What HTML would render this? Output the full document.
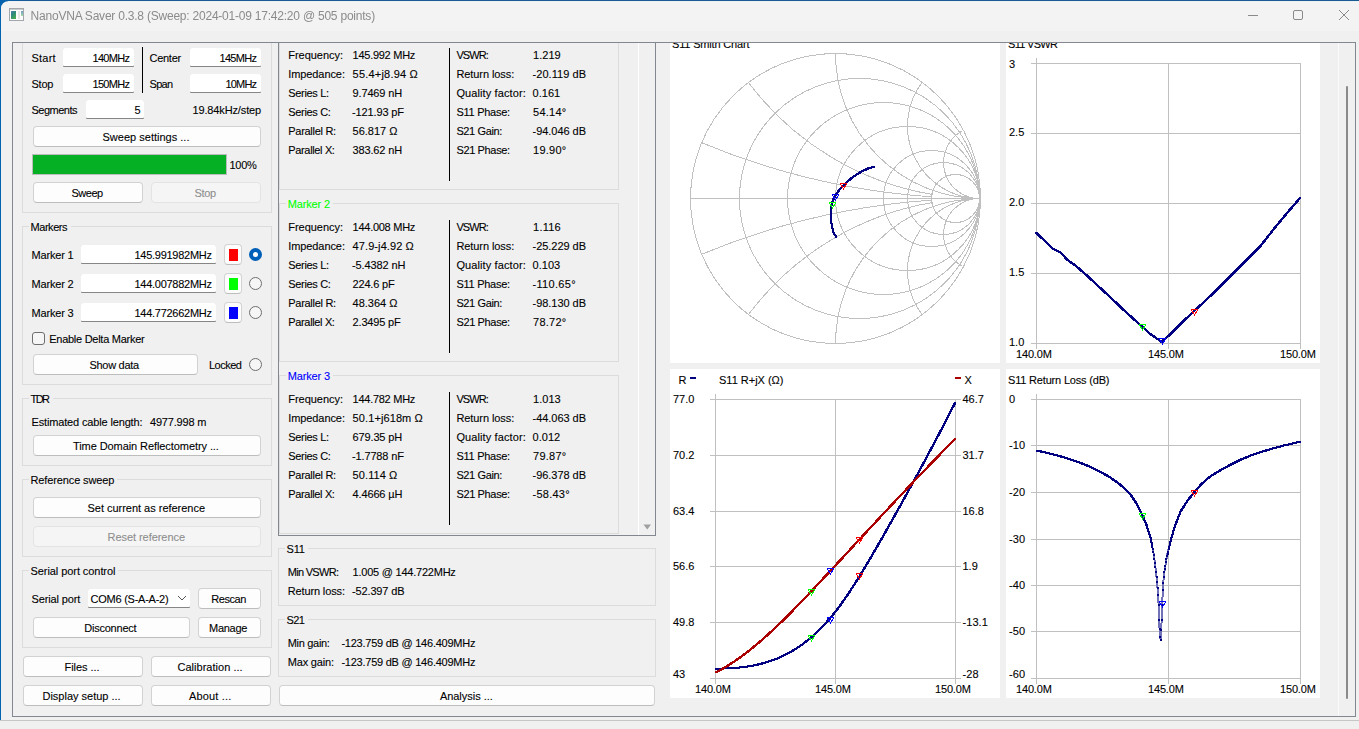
<!DOCTYPE html>
<html lang="en"><head><meta charset="utf-8"><title>NanoVNA Saver 0.3.8</title>
<style>
html,body{margin:0;padding:0}
body{width:1359px;height:729px;overflow:hidden;position:relative;background:#f0f0f0;font-family:"Liberation Sans",sans-serif;font-size:11px;line-height:14px;color:#000}
div,span{box-sizing:border-box}
.a{position:absolute}
.t{position:absolute;white-space:pre;height:14px;-webkit-text-stroke:.1px #000}
.in{position:absolute;background:#fff;border-radius:3px 3px 1px 1px;box-shadow:inset 0 -1px 0 #868686;overflow:hidden}
.b{position:absolute;background:#fdfdfd;border:1px solid #d2d2d2;border-bottom-color:#bdbdbd;border-radius:4px;height:21px}
.b.d{background:#f5f5f5;border-color:#e3e3e3}
.g{position:absolute;border:1px solid #dcdcdc}
.vl{position:absolute;width:1px;background:#000}
.rd{position:absolute;width:13px;height:13px;border-radius:50%;border:1px solid #6e6e6e;background:#f6f6f6}
.rd.on{border:4px solid #005fb8;background:#fff}
svg{position:absolute;left:0;top:0}
svg text{font-family:"Liberation Sans",sans-serif;font-size:11px;fill:#000;white-space:pre;stroke:#000;stroke-width:.1px}

</style></head>
<body>
<div class="g" style="left:22px;top:30px;width:250px;height:183px;"></div>
<div class="t" style="left:31.5px;top:51px;letter-spacing:0.21px;">Start</div>
<div class="in" style="left:63px;top:48px;width:71px;height:19px;"></div><div class="t" style="left:92.5px;top:51px;letter-spacing:-0.69px;">140MHz</div>
<div class="t" style="left:149.5px;top:51px;letter-spacing:-0.27px;">Center</div>
<div class="in" style="left:190px;top:48px;width:71px;height:19px;"></div><div class="t" style="left:219.5px;top:51px;letter-spacing:-0.69px;">145MHz</div>
<div class="t" style="left:31.5px;top:77px;letter-spacing:-0.25px;">Stop</div>
<div class="in" style="left:63px;top:74px;width:71px;height:19px;"></div><div class="t" style="left:92.5px;top:77px;letter-spacing:-0.69px;">150MHz</div>
<div class="t" style="left:149.5px;top:77px;letter-spacing:-0.69px;">Span</div>
<div class="in" style="left:190px;top:74px;width:71px;height:19px;"></div><div class="t" style="left:225.5px;top:77px;letter-spacing:-0.84px;">10MHz</div>
<div class="vl" style="left:142px;top:47px;height:46px"></div>
<div class="t" style="left:31.5px;top:103px;letter-spacing:-0.5px;">Segments</div>
<div class="in" style="left:86px;top:100px;width:58px;height:19px;"></div><div class="t" style="left:134.5px;top:103px;">5</div>
<div class="t" style="left:192.5px;top:103px;letter-spacing:-0.14px;">19.84kHz/step</div>
<div class="b" style="left:33px;top:126px;width:228px;"></div><div class="t" style="left:102.5px;top:130px;letter-spacing:0.01px;">Sweep settings ...</div>
<div class="a" style="left:32px;top:154px;width:195px;height:21px;border:1px solid #bcbcbc;background:#06b025"></div>
<div class="t" style="left:229.5px;top:158px;letter-spacing:-0.28px;">100%</div>
<div class="b" style="left:33px;top:182px;width:110px;"></div><div class="t" style="left:71.5px;top:186px;letter-spacing:-0.5px;">Sweep</div>
<div class="b d" style="left:151px;top:182px;width:110px;"></div><div class="t" style="left:194.5px;top:186px;letter-spacing:-0.34px;color:#8e8e8e;-webkit-text-stroke-color:#8e8e8e">Stop</div>
<div class="g" style="left:22px;top:226px;width:250px;height:159px;"></div><div class="a" style="left:28.5px;top:226px;width:42.5px;height:1px;background:#f0f0f0"></div><div class="t" style="left:30.5px;top:220px;letter-spacing:-0.45px;">Markers</div>
<div class="t" style="left:31.5px;top:248px;letter-spacing:-0.18px;">Marker 1</div>
<div class="in" style="left:81px;top:245px;width:135px;height:19px;"></div><div class="t" style="left:134.5px;top:248px;letter-spacing:-0.27px;">145.991982MHz</div>
<div class="b" style="left:224px;top:244px;width:18px"><div class="a" style="left:3.5px;top:4px;width:9px;height:12px;background:#ff0000"></div></div>
<div class="rd on" style="left:248.5px;top:248.0px"></div>
<div class="t" style="left:31.5px;top:277px;letter-spacing:-0.18px;">Marker 2</div>
<div class="in" style="left:81px;top:274px;width:135px;height:19px;"></div><div class="t" style="left:134.5px;top:277px;letter-spacing:-0.27px;">144.007882MHz</div>
<div class="b" style="left:224px;top:273px;width:18px"><div class="a" style="left:3.5px;top:4px;width:9px;height:12px;background:#00ff00"></div></div>
<div class="rd" style="left:248.5px;top:277.0px"></div>
<div class="t" style="left:31.5px;top:306px;letter-spacing:-0.18px;">Marker 3</div>
<div class="in" style="left:81px;top:303px;width:135px;height:19px;"></div><div class="t" style="left:134.5px;top:306px;letter-spacing:-0.27px;">144.772662MHz</div>
<div class="b" style="left:224px;top:302px;width:18px"><div class="a" style="left:3.5px;top:4px;width:9px;height:12px;background:#0000ff"></div></div>
<div class="rd" style="left:248.5px;top:306.0px"></div>
<div class="a" style="left:32px;top:332px;width:13px;height:13px;border:1px solid #6e6e6e;border-radius:3px;background:#f6f6f6"></div>
<div class="t" style="left:49.25px;top:332px;letter-spacing:-0.27px;">Enable Delta Marker</div>
<div class="b" style="left:33px;top:354px;width:165px;"></div><div class="t" style="left:89.5px;top:358px;letter-spacing:-0.3px;">Show data</div>
<div class="t" style="left:209px;top:358px;letter-spacing:-0.52px;">Locked</div>
<div class="rd" style="left:248.5px;top:358.0px"></div>
<div class="g" style="left:22px;top:398px;width:250px;height:68px;"></div><div class="a" style="left:28.5px;top:398px;width:24.5px;height:1px;background:#f0f0f0"></div><div class="t" style="left:30.5px;top:392px;letter-spacing:-1.58px;">TDR</div>
<div class="t" style="left:31.5px;top:415px;letter-spacing:-0.15px;">Estimated cable length:</div>
<div class="t" style="left:150px;top:415px;letter-spacing:-0.19px;">4977.998 m</div>
<div class="b" style="left:33px;top:435px;width:228px;"></div><div class="t" style="left:73px;top:439px;letter-spacing:-0.08px;">Time Domain Reflectometry ...</div>
<div class="g" style="left:22px;top:479px;width:250px;height:78px;"></div><div class="a" style="left:28.5px;top:479px;width:88.75px;height:1px;background:#f0f0f0"></div><div class="t" style="left:30.5px;top:473px;letter-spacing:-0.12px;">Reference sweep</div>
<div class="b" style="left:33px;top:497px;width:228px;"></div><div class="t" style="left:87.5px;top:501px;letter-spacing:-0.02px;">Set current as reference</div>
<div class="b d" style="left:33px;top:526px;width:228px;"></div><div class="t" style="left:107.5px;top:530px;letter-spacing:-0.05px;color:#8e8e8e;-webkit-text-stroke-color:#8e8e8e">Reset reference</div>
<div class="g" style="left:22px;top:570px;width:250px;height:78px;"></div><div class="a" style="left:28.5px;top:570px;width:89.5px;height:1px;background:#f0f0f0"></div><div class="t" style="left:30.5px;top:564px;letter-spacing:-0.07px;">Serial port control</div>
<div class="t" style="left:31.5px;top:592px;letter-spacing:-0.13px;">Serial port</div>
<div class="in" style="left:88px;top:589px;width:102px;height:19px;"></div>
<div class="t" style="left:90.5px;top:592px;letter-spacing:-0.24px;">COM6 (S-A-A-2)</div>
<svg style="left:177px;top:595px" width="10" height="7" viewBox="0 0 10 7"><path d="M1 1L5 5L9 1" fill="none" stroke="#555" stroke-width="1"/></svg>
<div class="b" style="left:198px;top:588px;width:63px;"></div><div class="t" style="left:211.25px;top:592px;letter-spacing:-0.44px;">Rescan</div>
<div class="b" style="left:33px;top:617px;width:157px;"></div><div class="t" style="left:84.25px;top:621px;letter-spacing:-0.23px;">Disconnect</div>
<div class="b" style="left:198px;top:617px;width:63px;"></div><div class="t" style="left:209px;top:621px;letter-spacing:-0.28px;">Manage</div>
<div class="b" style="left:23px;top:656px;width:120px;"></div><div class="t" style="left:64.5px;top:660px;letter-spacing:-0.05px;">Files ...</div>
<div class="b" style="left:151px;top:656px;width:120px;"></div><div class="t" style="left:177.5px;top:660px;letter-spacing:0.02px;">Calibration ...</div>
<div class="b" style="left:23px;top:685px;width:120px;"></div><div class="t" style="left:42.5px;top:689px;letter-spacing:-0.01px;">Display setup ...</div>
<div class="b" style="left:151px;top:685px;width:120px;"></div><div class="t" style="left:189px;top:689px;letter-spacing:0.17px;">About ...</div>
<div class="a" style="left:278px;top:30px;width:378px;height:506px;border:1px solid #828790"></div>
<div class="a" style="left:638px;top:43px;width:1px;height:492px;background:#fff"></div>
<svg style="left:643px;top:524px" width="9" height="7" viewBox="0 0 9 7"><path d="M0.5 0.5H8L4.25 5.6Z" fill="#a0a0a0"/></svg>
<div class="g" style="left:279px;top:31px;width:340px;height:159px;"></div><div class="a" style="left:285.7px;top:31px;width:47.2px;height:1px;background:#f0f0f0"></div><div class="t" style="left:287.7px;top:25px;letter-spacing:-0.15px;color:#ff0000;-webkit-text-stroke-color:#ff0000;">Marker 1</div>
<div class="vl" style="left:449px;top:48px;height:133px"></div>
<div class="t" style="left:288.3px;top:48px;letter-spacing:-0.04px;">Frequency:</div>
<div class="t" style="left:352.6px;top:48px;letter-spacing:-0.27px;">145.992 MHz</div>
<div class="t" style="left:456.4px;top:48px;letter-spacing:-0.88px;">VSWR:</div>
<div class="t" style="left:533.1px;top:48px;letter-spacing:0.03px;">1.219</div>
<div class="t" style="left:288.2px;top:67px;letter-spacing:-0.08px;">Impedance:</div>
<div class="t" style="left:352.6px;top:67px;letter-spacing:0.2px;">55.4+j8.94 Ω</div>
<div class="t" style="left:456.4px;top:67px;letter-spacing:-0.08px;">Return loss:</div>
<div class="t" style="left:532.5px;top:67px;letter-spacing:0.06px;">-20.119 dB</div>
<div class="t" style="left:288.3px;top:86px;letter-spacing:-0.33px;">Series L:</div>
<div class="t" style="left:352.6px;top:86px;letter-spacing:-0.16px;">9.7469 nH</div>
<div class="t" style="left:456.4px;top:86px;letter-spacing:0.11px;">Quality factor:</div>
<div class="t" style="left:532.5px;top:86px;letter-spacing:0.03px;">0.161</div>
<div class="t" style="left:288.3px;top:105px;letter-spacing:-0.33px;">Series C:</div>
<div class="t" style="left:352px;top:105px;letter-spacing:-0.13px;">-121.93 pF</div>
<div class="t" style="left:456.4px;top:105px;letter-spacing:-0.26px;">S11 Phase:</div>
<div class="t" style="left:533.1px;top:105px;letter-spacing:0.24px;">54.14°</div>
<div class="t" style="left:288.3px;top:124px;letter-spacing:-0.29px;">Parallel R:</div>
<div class="t" style="left:352.6px;top:124px;letter-spacing:-0.02px;">56.817 Ω</div>
<div class="t" style="left:456.4px;top:124px;letter-spacing:-0.38px;">S21 Gain:</div>
<div class="t" style="left:532.5px;top:124px;letter-spacing:-0.03px;">-94.046 dB</div>
<div class="t" style="left:288.3px;top:143px;letter-spacing:-0.35px;">Parallel X:</div>
<div class="t" style="left:352.6px;top:143px;letter-spacing:-0.16px;">383.62 nH</div>
<div class="t" style="left:456.4px;top:143px;letter-spacing:-0.35px;">S21 Phase:</div>
<div class="t" style="left:533.1px;top:143px;letter-spacing:0.24px;">19.90°</div>
<div class="g" style="left:279px;top:203px;width:340px;height:159px;"></div><div class="a" style="left:285.7px;top:203px;width:47.2px;height:1px;background:#f0f0f0"></div><div class="t" style="left:287.7px;top:197px;letter-spacing:-0.15px;color:#00ff00;-webkit-text-stroke-color:#00ff00;">Marker 2</div>
<div class="vl" style="left:449px;top:220px;height:133px"></div>
<div class="t" style="left:288.3px;top:220px;letter-spacing:-0.04px;">Frequency:</div>
<div class="t" style="left:352.6px;top:220px;letter-spacing:-0.27px;">144.008 MHz</div>
<div class="t" style="left:456.4px;top:220px;letter-spacing:-0.88px;">VSWR:</div>
<div class="t" style="left:533.1px;top:220px;letter-spacing:0.23px;">1.116</div>
<div class="t" style="left:288.2px;top:239px;letter-spacing:-0.08px;">Impedance:</div>
<div class="t" style="left:352.6px;top:239px;letter-spacing:0.09px;">47.9-j4.92 Ω</div>
<div class="t" style="left:456.4px;top:239px;letter-spacing:-0.08px;">Return loss:</div>
<div class="t" style="left:532.5px;top:239px;letter-spacing:-0.03px;">-25.229 dB</div>
<div class="t" style="left:288.3px;top:258px;letter-spacing:-0.33px;">Series L:</div>
<div class="t" style="left:352px;top:258px;letter-spacing:-0.11px;">-5.4382 nH</div>
<div class="t" style="left:456.4px;top:258px;letter-spacing:0.11px;">Quality factor:</div>
<div class="t" style="left:532.5px;top:258px;letter-spacing:0.03px;">0.103</div>
<div class="t" style="left:288.3px;top:277px;letter-spacing:-0.33px;">Series C:</div>
<div class="t" style="left:352.6px;top:277px;letter-spacing:-0.2px;">224.6 pF</div>
<div class="t" style="left:456.4px;top:277px;letter-spacing:-0.26px;">S11 Phase:</div>
<div class="t" style="left:532.5px;top:277px;letter-spacing:0.32px;">-110.65°</div>
<div class="t" style="left:288.3px;top:296px;letter-spacing:-0.29px;">Parallel R:</div>
<div class="t" style="left:352.6px;top:296px;letter-spacing:-0.02px;">48.364 Ω</div>
<div class="t" style="left:456.4px;top:296px;letter-spacing:-0.38px;">S21 Gain:</div>
<div class="t" style="left:532.5px;top:296px;letter-spacing:-0.03px;">-98.130 dB</div>
<div class="t" style="left:288.3px;top:315px;letter-spacing:-0.35px;">Parallel X:</div>
<div class="t" style="left:352.6px;top:315px;letter-spacing:-0.19px;">2.3495 pF</div>
<div class="t" style="left:456.4px;top:315px;letter-spacing:-0.35px;">S21 Phase:</div>
<div class="t" style="left:533.1px;top:315px;letter-spacing:0.24px;">78.72°</div>
<div class="g" style="left:279px;top:375px;width:340px;height:159px;"></div><div class="a" style="left:285.7px;top:375px;width:47.2px;height:1px;background:#f0f0f0"></div><div class="t" style="left:287.7px;top:369px;letter-spacing:-0.15px;color:#0000ff;-webkit-text-stroke-color:#0000ff;">Marker 3</div>
<div class="vl" style="left:449px;top:392px;height:133px"></div>
<div class="t" style="left:288.3px;top:392px;letter-spacing:-0.04px;">Frequency:</div>
<div class="t" style="left:352.6px;top:392px;letter-spacing:-0.27px;">144.782 MHz</div>
<div class="t" style="left:456.4px;top:392px;letter-spacing:-0.88px;">VSWR:</div>
<div class="t" style="left:533.1px;top:392px;letter-spacing:0.03px;">1.013</div>
<div class="t" style="left:288.2px;top:411px;letter-spacing:-0.08px;">Impedance:</div>
<div class="t" style="left:352.6px;top:411px;letter-spacing:0.1px;">50.1+j618m Ω</div>
<div class="t" style="left:456.4px;top:411px;letter-spacing:-0.08px;">Return loss:</div>
<div class="t" style="left:532.5px;top:411px;letter-spacing:-0.03px;">-44.063 dB</div>
<div class="t" style="left:288.3px;top:430px;letter-spacing:-0.33px;">Series L:</div>
<div class="t" style="left:352.6px;top:430px;letter-spacing:-0.15px;">679.35 pH</div>
<div class="t" style="left:456.4px;top:430px;letter-spacing:0.11px;">Quality factor:</div>
<div class="t" style="left:532.5px;top:430px;letter-spacing:0.03px;">0.012</div>
<div class="t" style="left:288.3px;top:449px;letter-spacing:-0.33px;">Series C:</div>
<div class="t" style="left:352px;top:449px;letter-spacing:-0.14px;">-1.7788 nF</div>
<div class="t" style="left:456.4px;top:449px;letter-spacing:-0.26px;">S11 Phase:</div>
<div class="t" style="left:533.1px;top:449px;letter-spacing:0.24px;">79.87°</div>
<div class="t" style="left:288.3px;top:468px;letter-spacing:-0.29px;">Parallel R:</div>
<div class="t" style="left:352.6px;top:468px;letter-spacing:0.09px;">50.114 Ω</div>
<div class="t" style="left:456.4px;top:468px;letter-spacing:-0.38px;">S21 Gain:</div>
<div class="t" style="left:532.5px;top:468px;letter-spacing:-0.03px;">-96.378 dB</div>
<div class="t" style="left:288.3px;top:487px;letter-spacing:-0.35px;">Parallel X:</div>
<div class="t" style="left:352.6px;top:487px;letter-spacing:-0.15px;">4.4666 µH</div>
<div class="t" style="left:456.4px;top:487px;letter-spacing:-0.35px;">S21 Phase:</div>
<div class="t" style="left:532.5px;top:487px;letter-spacing:0.26px;">-58.43°</div>
<div class="g" style="left:278px;top:548px;width:378px;height:58px;"></div><div class="a" style="left:284.5px;top:548px;width:23.3px;height:1px;background:#f0f0f0"></div><div class="t" style="left:286.5px;top:542px;letter-spacing:-0.17px;">S11</div>
<div class="t" style="left:287.7px;top:565px;letter-spacing:-0.69px;">Min VSWR:</div>
<div class="t" style="left:352.6px;top:565px;letter-spacing:-0.23px;">1.005 @ 144.722MHz</div>
<div class="t" style="left:287.7px;top:584px;letter-spacing:-0.13px;">Return loss:</div>
<div class="t" style="left:352px;top:584px;letter-spacing:-0.14px;">-52.397 dB</div>
<div class="g" style="left:278px;top:619px;width:378px;height:58px;"></div><div class="a" style="left:284.5px;top:619px;width:23.3px;height:1px;background:#f0f0f0"></div><div class="t" style="left:286.5px;top:613px;letter-spacing:-0.58px;">S21</div>
<div class="t" style="left:287.7px;top:636px;letter-spacing:-0.3px;">Min gain:</div>
<div class="t" style="left:341.4px;top:636px;letter-spacing:-0.24px;">-123.759 dB @ 146.409MHz</div>
<div class="t" style="left:287.7px;top:655px;letter-spacing:-0.17px;">Max gain:</div>
<div class="t" style="left:341.4px;top:655px;letter-spacing:-0.24px;">-123.759 dB @ 146.409MHz</div>
<div class="b" style="left:279px;top:685px;width:376px;"></div><div class="t" style="left:439.9px;top:689px;letter-spacing:-0.03px;">Analysis ...</div>
<div class="a" style="left:0;top:0;width:1359px;height:31px;background:#f3f3f3"></div>
<div class="a" style="left:0;top:31px;width:1359px;height:11px;background:#f0f0f0"></div>
<svg width="1359" height="729" viewBox="0 0 1359 729"><defs><linearGradient id="tb" x1="0" y1="0" x2="1" y2="0"><stop offset="0" stop-color="#0563b0"/><stop offset=".02" stop-color="#1a5b93"/><stop offset="1" stop-color="#1a5b93"/></linearGradient><linearGradient id="ig" x1="0" y1="0" x2=".6" y2="1"><stop offset="0" stop-color="#4f7fb5"/><stop offset=".45" stop-color="#2f8a7c"/><stop offset="1" stop-color="#45a854"/></linearGradient><linearGradient id="ih" x1="0" y1="0" x2="0" y2="1"><stop offset="0" stop-color="#6f9fd0"/><stop offset="1" stop-color="#a6dba0"/></linearGradient></defs><path d="M0 0H1359V1.2H8A7 7 0 0 0 1 8.2V720H0Z" fill="url(#tb)"/><rect x="8" y="1.2" width="1351" height="1" fill="#fbfbfb"/><rect x="0" y="720" width="1359" height="1" fill="#c6c6c6"/><rect x="9.5" y="8.5" width="14" height="12" fill="#fdfdfd" stroke="#a3a6aa"/><rect x="10" y="9" width="13" height="1" fill="#c9cbcd"/><rect x="11" y="11" width="5" height="8" fill="url(#ig)"/><rect x="18" y="11" width="2" height="8" fill="#e6e6e6"/><rect x="21" y="11" width="2" height="5" fill="url(#ih)"/><g stroke="#8a8a8a" fill="none" stroke-width="1"><path d="M1248 15.5H1258"/><rect x="1293.5" y="10.5" width="9" height="9" rx="1.5"/><path d="M1339 10L1349 20M1349 10L1339 20"/></g></svg>
<div class="a" style="left:30.6px;top:8px;font-size:12px;line-height:16px;color:#8b8b8b;filter:grayscale(1);white-space:pre;letter-spacing:-0.22px">NanoVNA Saver 0.3.8 (Sweep: 2024-01-09 17:42:20 @ 505 points)</div>
<div class="a" style="left:12px;top:42px;width:1344px;height:675px;border:1px solid #828790"></div>
<div class="a" style="left:1338px;top:43px;width:1px;height:673px;background:#fafafa"></div>
<div class="a" style="left:1346px;top:86px;width:2px;height:613px;background:#8a8a8a;border-radius:1px"></div>
<svg width="1359" height="729" viewBox="0 0 1359 729">
<defs><clipPath id="cu"><rect x="13" y="43" width="1325" height="673"/></clipPath></defs>
<g clip-path="url(#cu)"><rect x="670" y="33" width="330" height="330" fill="#fff"/><text x="672" y="48" textLength="77.5">S11 Smith Chart</text><g fill="none" stroke="#c0c0c0" stroke-width="1" shape-rendering="crispEdges"><circle cx="835.5" cy="198.5" r="145"/><path d="M690 198.5H981"/><circle cx="907.5" cy="198.5" r="72"/><circle cx="931.5" cy="198.5" r="48"/><circle cx="943.5" cy="198.5" r="36"/><circle cx="955.5" cy="198.5" r="24"/><circle cx="883.5" cy="198.5" r="96"/><circle cx="859.5" cy="198.5" r="120"/><path d="M979.50 198.50A36 36 0 0 0 962.60 266.29M979.50 198.50A36 36 0 0 1 962.60 130.71M980.00 198.50A72.5 72.5 0 0 0 922.10 314.63M980.00 198.50A72.5 72.5 0 0 1 922.10 82.37M980.50 198.50A145 145 0 0 0 835.50 343.50M980.50 198.50A145 145 0 0 1 835.50 53.50M932.64 202.48A290 290 0 0 0 748.90 313.97M932.64 194.52A290 290 0 0 1 748.90 83.03M931.82 200.14A725 725 0 0 0 700.72 254.66M931.82 196.86A725 725 0 0 1 700.72 142.34"/></g><g shape-rendering="crispEdges"><path d="M873.7 166.2L868.5 167.6L863 170.1L857.5 173.1L852 176.9L847.2 180.8L842.4 185.4L838.3 190L834.9 194.8L832.1 200.3L830.8 205.7L830.4 211.2L830.4 218.1L831.2 224.9L832.8 231.8L836.2 237M874.7 166.2L869.5 167.6L864 170.1L858.5 173.1L853 176.9L848.2 180.8L843.4 185.4L839.3 190L835.9 194.8L833.1 200.3L831.8 205.7L831.4 211.2L831.4 218.1L832.2 224.9L833.8 231.8L837.2 237M873.7 167.2L868.5 168.6L863 171.1L857.5 174.1L852 177.9L847.2 181.8L842.4 186.4L838.3 191L834.9 195.8L832.1 201.3L830.8 206.7L830.4 212.2L830.4 219.1L831.2 225.9L832.8 232.8L836.2 238M874.7 167.2L869.5 168.6L864 171.1L858.5 174.1L853 177.9L848.2 181.8L843.4 186.4L839.3 191L835.9 195.8L833.1 201.3L831.8 206.7L831.4 212.2L831.4 219.1L832.2 225.9L833.8 232.8L837.2 238" fill="none" stroke="#000080" stroke-width="1"/><path d="M840 183.5H847M840.5 184L843.5 189L846.5 184" fill="none" stroke="#ff0000" stroke-width="1"/><path d="M829 202.5H836M829.5 203L832.5 208L835.5 203" fill="none" stroke="#00ff00" stroke-width="1"/><path d="M832 194.5H839M832.5 195L835.5 200L838.5 195" fill="none" stroke="#0000ff" stroke-width="1"/></g></g>
<g clip-path="url(#cu)">
<rect x="1006" y="33" width="314" height="330" fill="#fff"/><path d="M1036.5 58V349M1168.5 63V349M1300.5 63V349M1031 63.5H1301M1031 133.5H1301M1031 203.5H1301M1031 273.5H1301M1031 343.5H1301" fill="none" stroke="#c0c0c0" stroke-width="1" shape-rendering="crispEdges"/><text x="1009" y="68" textLength="6">3</text><text x="1009" y="136" textLength="15.3">2.5</text><text x="1009" y="206" textLength="15.3">2.0</text><text x="1009" y="276" textLength="15.3">1.5</text><text x="1009" y="346" textLength="15.3">1.0</text><text x="1016" y="358" textLength="35.8">140.0M</text><text x="1148" y="358" textLength="35.8">145.0M</text><text x="1280" y="358" textLength="35.8">150.0M</text>
<text x="1008" y="48" textLength="50">S11 VSWR</text>
<g shape-rendering="crispEdges">
<path d="M1035.6 232.3L1042.7 238.9L1051.4 247.6L1060.2 252L1066.8 259.3L1075.6 265.6L1086.5 275.1L1097.5 285.4L1108.5 295.5L1121.6 308L1134.8 320L1149.5 333.2L1161 341.3L1168 335.4L1179 324.4L1193.3 310.8L1205.3 299.9L1218.5 287.1L1231.6 274L1244.8 260.8L1259.5 246.1L1274.5 227L1287 212L1300 197M1036.6 232.3L1043.7 238.9L1052.4 247.6L1061.2 252L1067.8 259.3L1076.6 265.6L1087.5 275.1L1098.5 285.4L1109.5 295.5L1122.6 308L1135.8 320L1150.5 333.2L1162 341.3L1169 335.4L1180 324.4L1194.3 310.8L1206.3 299.9L1219.5 287.1L1232.6 274L1245.8 260.8L1260.5 246.1L1275.5 227L1288 212L1301 197M1035.6 233.3L1042.7 239.9L1051.4 248.6L1060.2 253L1066.8 260.3L1075.6 266.6L1086.5 276.1L1097.5 286.4L1108.5 296.5L1121.6 309L1134.8 321L1149.5 334.2L1161 342.3L1168 336.4L1179 325.4L1193.3 311.8L1205.3 300.9L1218.5 288.1L1231.6 275L1244.8 261.8L1259.5 247.1L1274.5 228L1287 213L1300 198M1036.6 233.3L1043.7 239.9L1052.4 248.6L1061.2 253L1067.8 260.3L1076.6 266.6L1087.5 276.1L1098.5 286.4L1109.5 296.5L1122.6 309L1135.8 321L1150.5 334.2L1162 342.3L1169 336.4L1180 325.4L1194.3 311.8L1206.3 300.9L1219.5 288.1L1232.6 275L1245.8 261.8L1260.5 247.1L1275.5 228L1288 213L1301 198" fill="none" stroke="#000080" stroke-width="1"/>
<path d="M1191 309.5H1198M1191.5 310L1194.5 315L1197.5 310" fill="none" stroke="#ff0000" stroke-width="1"/>
<path d="M1139 324.5H1146M1139.5 325L1142.5 330L1145.5 325" fill="none" stroke="#00ff00" stroke-width="1"/>
<path d="M1159 338.5H1166M1159.5 339L1162.5 344L1165.5 339" fill="none" stroke="#0000ff" stroke-width="1"/>
</g></g>
<rect x="670" y="369" width="330" height="329" fill="#fff"/><path d="M715.5 394V684M835.5 399V684M955.5 399V684M710 399.5H961M710 455.5H961M710 511.5H961M710 566.5H961M710 622.5H961M710 678.5H961" fill="none" stroke="#c0c0c0" stroke-width="1" shape-rendering="crispEdges"/><text x="673" y="403" textLength="21.3">77.0</text><text x="962.5" y="403" textLength="21.3">46.7</text><text x="673" y="459" textLength="21.3">70.2</text><text x="962.5" y="459" textLength="21.3">31.7</text><text x="673" y="515" textLength="21.3">63.4</text><text x="962.5" y="515" textLength="21.3">16.8</text><text x="673" y="570" textLength="21.3">56.6</text><text x="962.5" y="570" textLength="15.3">1.9</text><text x="673" y="626" textLength="21.3">49.8</text><text x="962.5" y="626" textLength="25.3">-13.1</text><text x="673" y="678" textLength="12">43</text><text x="962.5" y="678" textLength="16">-28</text><text x="695" y="693" textLength="35.8">140.0M</text><text x="815" y="693" textLength="35.8">145.0M</text><text x="935" y="693" textLength="35.8">150.0M</text>
<text x="678.5" y="384">R</text><text x="719" y="384" textLength="64.5">S11 R+jX (Ω)</text><text x="964.5" y="384">X</text>
<path d="M690 378H696" stroke="#000080" stroke-width="2" shape-rendering="crispEdges"/>
<path d="M955 378H961" stroke="#aa0000" stroke-width="2" shape-rendering="crispEdges"/>
<g shape-rendering="crispEdges">
<path d="M714.7 668.1L717.7 668.1L720.7 668.1L723.7 668L726.7 667.9L729.7 667.7L732.7 667.5L735.7 667.3L738.7 667L741.7 666.7L744.7 666.3L747.7 665.9L750.7 665.4L753.7 664.8L756.7 664.2L759.7 663.5L762.7 662.7L765.7 661.9L768.7 660.9L771.7 659.9L774.7 658.8L777.7 657.6L780.7 656.3L783.7 654.8L786.7 653.3L789.7 651.7L792.7 649.9L795.7 648.1L798.7 646.1L801.7 644L804.7 641.7L807.7 639.4L810.7 636.8L813.7 634.2L816.7 631.4L819.7 628.4L822.7 625.3L825.7 622.1L828.7 618.7L831.7 615.1L834.8 611.3L837.8 607.4L840.8 603.3L843.8 599.1L846.8 594.7L849.8 590.2L852.8 585.6L855.8 580.9L858.8 576.1L861.8 571.2L864.8 566.2L867.8 561.2L870.8 556.1L873.8 550.9L876.8 545.8L879.8 540.5L882.8 535.3L885.8 530L888.8 524.7L891.8 519.4L894.8 514L897.8 508.7L900.8 503.2L903.8 497.8L906.8 492.4L909.8 486.9L912.8 481.4L915.8 475.9L918.8 470.4L921.8 464.8L924.8 459.2L927.8 453.6L930.8 448L933.8 442.4L936.8 436.7L939.8 431L942.8 425.2L945.8 419.4L948.8 413.6L951.8 407.8L954.8 401.9M715.7 668.1L718.7 668.1L721.7 668.1L724.7 668L727.7 667.9L730.7 667.7L733.7 667.5L736.7 667.3L739.7 667L742.7 666.7L745.7 666.3L748.7 665.9L751.7 665.4L754.7 664.8L757.7 664.2L760.7 663.5L763.7 662.7L766.7 661.9L769.7 660.9L772.7 659.9L775.7 658.8L778.7 657.6L781.7 656.3L784.7 654.8L787.7 653.3L790.7 651.7L793.7 649.9L796.7 648.1L799.7 646.1L802.7 644L805.7 641.7L808.7 639.4L811.7 636.8L814.7 634.2L817.7 631.4L820.7 628.4L823.7 625.3L826.7 622.1L829.7 618.7L832.7 615.1L835.8 611.3L838.8 607.4L841.8 603.3L844.8 599.1L847.8 594.7L850.8 590.2L853.8 585.6L856.8 580.9L859.8 576.1L862.8 571.2L865.8 566.2L868.8 561.2L871.8 556.1L874.8 550.9L877.8 545.8L880.8 540.5L883.8 535.3L886.8 530L889.8 524.7L892.8 519.4L895.8 514L898.8 508.7L901.8 503.2L904.8 497.8L907.8 492.4L910.8 486.9L913.8 481.4L916.8 475.9L919.8 470.4L922.8 464.8L925.8 459.2L928.8 453.6L931.8 448L934.8 442.4L937.8 436.7L940.8 431L943.8 425.2L946.8 419.4L949.8 413.6L952.8 407.8L955.8 401.9M714.7 669.1L717.7 669.1L720.7 669.1L723.7 669L726.7 668.9L729.7 668.7L732.7 668.5L735.7 668.3L738.7 668L741.7 667.7L744.7 667.3L747.7 666.9L750.7 666.4L753.7 665.8L756.7 665.2L759.7 664.5L762.7 663.7L765.7 662.9L768.7 661.9L771.7 660.9L774.7 659.8L777.7 658.6L780.7 657.3L783.7 655.8L786.7 654.3L789.7 652.7L792.7 650.9L795.7 649.1L798.7 647.1L801.7 645L804.7 642.7L807.7 640.4L810.7 637.8L813.7 635.2L816.7 632.4L819.7 629.4L822.7 626.3L825.7 623.1L828.7 619.7L831.7 616.1L834.8 612.3L837.8 608.4L840.8 604.3L843.8 600.1L846.8 595.7L849.8 591.2L852.8 586.6L855.8 581.9L858.8 577.1L861.8 572.2L864.8 567.2L867.8 562.2L870.8 557.1L873.8 551.9L876.8 546.8L879.8 541.5L882.8 536.3L885.8 531L888.8 525.7L891.8 520.4L894.8 515L897.8 509.7L900.8 504.2L903.8 498.8L906.8 493.4L909.8 487.9L912.8 482.4L915.8 476.9L918.8 471.4L921.8 465.8L924.8 460.2L927.8 454.6L930.8 449L933.8 443.4L936.8 437.7L939.8 432L942.8 426.2L945.8 420.4L948.8 414.6L951.8 408.8L954.8 402.9M715.7 669.1L718.7 669.1L721.7 669.1L724.7 669L727.7 668.9L730.7 668.7L733.7 668.5L736.7 668.3L739.7 668L742.7 667.7L745.7 667.3L748.7 666.9L751.7 666.4L754.7 665.8L757.7 665.2L760.7 664.5L763.7 663.7L766.7 662.9L769.7 661.9L772.7 660.9L775.7 659.8L778.7 658.6L781.7 657.3L784.7 655.8L787.7 654.3L790.7 652.7L793.7 650.9L796.7 649.1L799.7 647.1L802.7 645L805.7 642.7L808.7 640.4L811.7 637.8L814.7 635.2L817.7 632.4L820.7 629.4L823.7 626.3L826.7 623.1L829.7 619.7L832.7 616.1L835.8 612.3L838.8 608.4L841.8 604.3L844.8 600.1L847.8 595.7L850.8 591.2L853.8 586.6L856.8 581.9L859.8 577.1L862.8 572.2L865.8 567.2L868.8 562.2L871.8 557.1L874.8 551.9L877.8 546.8L880.8 541.5L883.8 536.3L886.8 531L889.8 525.7L892.8 520.4L895.8 515L898.8 509.7L901.8 504.2L904.8 498.8L907.8 493.4L910.8 487.9L913.8 482.4L916.8 476.9L919.8 471.4L922.8 465.8L925.8 460.2L928.8 454.6L931.8 449L934.8 443.4L937.8 437.7L940.8 432L943.8 426.2L946.8 420.4L949.8 414.6L952.8 408.8L955.8 402.9" fill="none" stroke="#000080" stroke-width="1"/>
<path d="M714.7 672.2L717.7 670.7L720.7 669L723.7 667.3L726.7 665.5L729.7 663.6L732.7 661.7L735.7 659.6L738.7 657.5L741.7 655.3L744.7 653.1L747.7 650.8L750.7 648.4L753.7 645.9L756.7 643.4L759.7 640.9L762.7 638.3L765.7 635.6L768.7 632.9L771.7 630.1L774.7 627.3L777.7 624.5L780.7 621.6L783.7 618.6L786.7 615.7L789.7 612.7L792.7 609.6L795.7 606.6L798.7 603.5L801.7 600.4L804.7 597.2L807.7 594.1L810.7 590.9L813.7 587.7L816.7 584.5L819.7 581.3L822.7 578L825.7 574.8L828.7 571.6L831.7 568.3L834.8 565.1L837.8 561.8L840.8 558.6L843.8 555.4L846.8 552.1L849.8 548.9L852.8 545.6L855.8 542.4L858.8 539.1L861.8 535.9L864.8 532.7L867.8 529.4L870.8 526.2L873.8 523L876.8 519.8L879.8 516.5L882.8 513.3L885.8 510.1L888.8 506.9L891.8 503.7L894.8 500.5L897.8 497.3L900.8 494.1L903.8 491L906.8 487.8L909.8 484.6L912.8 481.5L915.8 478.3L918.8 475.2L921.8 472.1L924.8 469L927.8 465.9L930.8 462.8L933.8 459.7L936.8 456.6L939.8 453.5L942.8 450.5L945.8 447.4L948.8 444.4L951.8 441.4L954.8 438.4M715.7 672.2L718.7 670.7L721.7 669L724.7 667.3L727.7 665.5L730.7 663.6L733.7 661.7L736.7 659.6L739.7 657.5L742.7 655.3L745.7 653.1L748.7 650.8L751.7 648.4L754.7 645.9L757.7 643.4L760.7 640.9L763.7 638.3L766.7 635.6L769.7 632.9L772.7 630.1L775.7 627.3L778.7 624.5L781.7 621.6L784.7 618.6L787.7 615.7L790.7 612.7L793.7 609.6L796.7 606.6L799.7 603.5L802.7 600.4L805.7 597.2L808.7 594.1L811.7 590.9L814.7 587.7L817.7 584.5L820.7 581.3L823.7 578L826.7 574.8L829.7 571.6L832.7 568.3L835.8 565.1L838.8 561.8L841.8 558.6L844.8 555.4L847.8 552.1L850.8 548.9L853.8 545.6L856.8 542.4L859.8 539.1L862.8 535.9L865.8 532.7L868.8 529.4L871.8 526.2L874.8 523L877.8 519.8L880.8 516.5L883.8 513.3L886.8 510.1L889.8 506.9L892.8 503.7L895.8 500.5L898.8 497.3L901.8 494.1L904.8 491L907.8 487.8L910.8 484.6L913.8 481.5L916.8 478.3L919.8 475.2L922.8 472.1L925.8 469L928.8 465.9L931.8 462.8L934.8 459.7L937.8 456.6L940.8 453.5L943.8 450.5L946.8 447.4L949.8 444.4L952.8 441.4L955.8 438.4M714.7 673.2L717.7 671.7L720.7 670L723.7 668.3L726.7 666.5L729.7 664.6L732.7 662.7L735.7 660.6L738.7 658.5L741.7 656.3L744.7 654.1L747.7 651.8L750.7 649.4L753.7 646.9L756.7 644.4L759.7 641.9L762.7 639.3L765.7 636.6L768.7 633.9L771.7 631.1L774.7 628.3L777.7 625.5L780.7 622.6L783.7 619.6L786.7 616.7L789.7 613.7L792.7 610.6L795.7 607.6L798.7 604.5L801.7 601.4L804.7 598.2L807.7 595.1L810.7 591.9L813.7 588.7L816.7 585.5L819.7 582.3L822.7 579L825.7 575.8L828.7 572.6L831.7 569.3L834.8 566.1L837.8 562.8L840.8 559.6L843.8 556.4L846.8 553.1L849.8 549.9L852.8 546.6L855.8 543.4L858.8 540.1L861.8 536.9L864.8 533.7L867.8 530.4L870.8 527.2L873.8 524L876.8 520.8L879.8 517.5L882.8 514.3L885.8 511.1L888.8 507.9L891.8 504.7L894.8 501.5L897.8 498.3L900.8 495.1L903.8 492L906.8 488.8L909.8 485.6L912.8 482.5L915.8 479.3L918.8 476.2L921.8 473.1L924.8 470L927.8 466.9L930.8 463.8L933.8 460.7L936.8 457.6L939.8 454.5L942.8 451.5L945.8 448.4L948.8 445.4L951.8 442.4L954.8 439.4M715.7 673.2L718.7 671.7L721.7 670L724.7 668.3L727.7 666.5L730.7 664.6L733.7 662.7L736.7 660.6L739.7 658.5L742.7 656.3L745.7 654.1L748.7 651.8L751.7 649.4L754.7 646.9L757.7 644.4L760.7 641.9L763.7 639.3L766.7 636.6L769.7 633.9L772.7 631.1L775.7 628.3L778.7 625.5L781.7 622.6L784.7 619.6L787.7 616.7L790.7 613.7L793.7 610.6L796.7 607.6L799.7 604.5L802.7 601.4L805.7 598.2L808.7 595.1L811.7 591.9L814.7 588.7L817.7 585.5L820.7 582.3L823.7 579L826.7 575.8L829.7 572.6L832.7 569.3L835.8 566.1L838.8 562.8L841.8 559.6L844.8 556.4L847.8 553.1L850.8 549.9L853.8 546.6L856.8 543.4L859.8 540.1L862.8 536.9L865.8 533.7L868.8 530.4L871.8 527.2L874.8 524L877.8 520.8L880.8 517.5L883.8 514.3L886.8 511.1L889.8 507.9L892.8 504.7L895.8 501.5L898.8 498.3L901.8 495.1L904.8 492L907.8 488.8L910.8 485.6L913.8 482.5L916.8 479.3L919.8 476.2L922.8 473.1L925.8 470L928.8 466.9L931.8 463.8L934.8 460.7L937.8 457.6L940.8 454.5L943.8 451.5L946.8 448.4L949.8 445.4L952.8 442.4L955.8 439.4" fill="none" stroke="#aa0000" stroke-width="1"/>
<path d="M856 573.5H863M856.5 574L859.5 579L862.5 574" fill="none" stroke="#ff0000" stroke-width="1"/>
<path d="M856 537.5H863M856.5 538L859.5 543L862.5 538" fill="none" stroke="#ff0000" stroke-width="1"/>
<path d="M808 635.5H815M808.5 636L811.5 641L814.5 636" fill="none" stroke="#00ff00" stroke-width="1"/>
<path d="M808 589.5H815M808.5 590L811.5 595L814.5 590" fill="none" stroke="#00ff00" stroke-width="1"/>
<path d="M827 617.5H834M827.5 618L830.5 623L833.5 618" fill="none" stroke="#0000ff" stroke-width="1"/>
<path d="M827 568.5H834M827.5 569L830.5 574L833.5 569" fill="none" stroke="#0000ff" stroke-width="1"/>
</g>
<rect x="1006" y="369" width="314" height="329" fill="#fff"/><path d="M1036.5 394V684M1168.5 399V684M1300.5 399V684M1031 399.5H1301M1031 445.5H1301M1031 492.5H1301M1031 539.5H1301M1031 585.5H1301M1031 631.5H1301M1031 678.5H1301" fill="none" stroke="#c0c0c0" stroke-width="1" shape-rendering="crispEdges"/><text x="1009" y="403" textLength="6">0</text><text x="1009" y="449" textLength="16">-10</text><text x="1009" y="496" textLength="16">-20</text><text x="1009" y="543" textLength="16">-30</text><text x="1009" y="589" textLength="16">-40</text><text x="1009" y="635" textLength="16">-50</text><text x="1009" y="678" textLength="16">-60</text><text x="1016" y="693" textLength="35.8">140.0M</text><text x="1148" y="693" textLength="35.8">145.0M</text><text x="1280" y="693" textLength="35.8">150.0M</text>
<text x="1008" y="384" textLength="101.5">S11 Return Loss (dB)</text>
<g shape-rendering="crispEdges">
<path d="M1035.6 449.9L1047.1 452.5L1058 455.2L1069 458.7L1080 462.4L1090.9 466.8L1099.7 471.2L1108.5 476.2L1117.3 482.2L1123.8 487.6L1130.4 494.7L1135.9 503L1141.4 514L1145.8 523.8L1149.1 534.5L1150.4 538.6L1151.8 546M1036.6 449.9L1048.1 452.5L1059 455.2L1070 458.7L1081 462.4L1091.9 466.8L1100.7 471.2L1109.5 476.2L1118.3 482.2L1124.8 487.6L1131.4 494.7L1136.9 503L1142.4 514L1146.8 523.8L1150.1 534.5L1151.4 538.6L1152.8 546M1035.6 450.9L1047.1 453.5L1058 456.2L1069 459.7L1080 463.4L1090.9 467.8L1099.7 472.2L1108.5 477.2L1117.3 483.2L1123.8 488.6L1130.4 495.7L1135.9 504L1141.4 515L1145.8 524.8L1149.1 535.5L1150.4 539.6L1151.8 547M1036.6 450.9L1048.1 453.5L1059 456.2L1070 459.7L1081 463.4L1091.9 467.8L1100.7 472.2L1109.5 477.2L1118.3 483.2L1124.8 488.6L1131.4 495.7L1136.9 504L1142.4 515L1146.8 524.8L1150.1 535.5L1151.4 539.6L1152.8 547" fill="none" stroke="#000080" stroke-width="1"/>
<path d="M1169.1 544.5L1170 540.7L1174.1 526.3L1180.2 510.8L1187.5 499.5L1193.9 491.6L1200.5 484L1209.2 476.3L1218 470.8L1229 464.7L1240 459.2L1250.9 454.8L1261.9 451.1L1272.9 447.8L1283.8 444.9L1292.6 442.9L1299.9 441.2M1170.1 544.5L1171 540.7L1175.1 526.3L1181.2 510.8L1188.5 499.5L1194.9 491.6L1201.5 484L1210.2 476.3L1219 470.8L1230 464.7L1241 459.2L1251.9 454.8L1262.9 451.1L1273.9 447.8L1284.8 444.9L1293.6 442.9L1300.9 441.2M1169.1 545.5L1170 541.7L1174.1 527.3L1180.2 511.8L1187.5 500.5L1193.9 492.6L1200.5 485L1209.2 477.3L1218 471.8L1229 465.7L1240 460.2L1250.9 455.8L1261.9 452.1L1272.9 448.8L1283.8 445.9L1292.6 443.9L1299.9 442.2M1170.1 545.5L1171 541.7L1175.1 527.3L1181.2 511.8L1188.5 500.5L1194.9 492.6L1201.5 485L1210.2 477.3L1219 471.8L1230 465.7L1241 460.2L1251.9 455.8L1262.9 452.1L1273.9 448.8L1284.8 445.9L1293.6 443.9L1300.9 442.2" fill="none" stroke="#000080" stroke-width="1"/>
<polyline points="1151.8,546.5 1152.3,549.3 1152.8,552.1 1153.4,554.8 1153.9,558.7 1154.4,563.1 1154.9,567.4 1155.5,571.7 1156,576.8 1156.5,582 1157,588.1 1157.5,595.2 1158.1,604.9 1158.6,620 1159.1,629.3 1159.6,637.1 1160.2,639.5 1160.7,630.3 1161.2,619.7 1161.7,604.7 1162.3,590.2 1162.8,582.5 1163.3,577.1 1163.8,571.9 1164.4,568.7 1164.9,565.5 1165.4,562.3 1165.9,559.1 1166.5,555.9 1167,553.6 1167.5,551.5 1168,549.3 1168.5,547.2 1169.1,545" fill="none" stroke="#7272b8" stroke-width="1"/>
<polyline points="1152.8,546.5 1153.3,549.3 1153.8,552.1 1154.4,554.8 1154.9,558.7 1155.4,563.1 1155.9,567.4 1156.5,571.7 1157,576.8 1157.5,582 1158,588.1 1158.5,595.2 1159.1,604.9 1159.6,620 1160.1,629.3 1160.6,637.1 1161.2,639.5 1161.7,630.3 1162.2,619.7 1162.7,604.7 1163.3,590.2 1163.8,582.5 1164.3,577.1 1164.8,571.9 1165.4,568.7 1165.9,565.5 1166.4,562.3 1166.9,559.1 1167.5,555.9 1168,553.6 1168.5,551.5 1169,549.3 1169.5,547.2 1170.1,545" fill="none" stroke="#7272b8" stroke-width="1"/>
<path d="M1151.3 546.5h2M1151.8 549.3h2M1152.3 552.1h2M1152.9 554.8h2M1153.4 558.7h2M1153.9 563.1h2M1154.4 567.4h2M1155 571.7h2M1155.5 576.8h2M1156 582h2M1156.5 588.1h2M1157 595.2h2M1157.6 604.9h2M1158.1 620h2M1158.6 629.3h2M1159.1 637.1h2M1159.7 639.5h2M1160.2 630.3h2M1160.7 619.7h2M1161.2 604.7h2M1161.8 590.2h2M1162.3 582.5h2M1162.8 577.1h2M1163.3 571.9h2M1163.9 568.7h2M1164.4 565.5h2M1164.9 562.3h2M1165.4 559.1h2M1166 555.9h2M1166.5 553.6h2M1167 551.5h2M1167.5 549.3h2M1168 547.2h2M1168.6 545h2" stroke="#000080" stroke-width="2"/>
<path d="M1191 490.5H1198M1191.5 491L1194.5 496L1197.5 491" fill="none" stroke="#ff0000" stroke-width="1"/>
<path d="M1139 513.5H1146M1139.5 514L1142.5 519L1145.5 514" fill="none" stroke="#00ff00" stroke-width="1"/>
<path d="M1159 601.5H1166M1159.5 602L1162.5 607L1165.5 602" fill="none" stroke="#0000ff" stroke-width="1"/>
</g>
</svg>
</body></html>
